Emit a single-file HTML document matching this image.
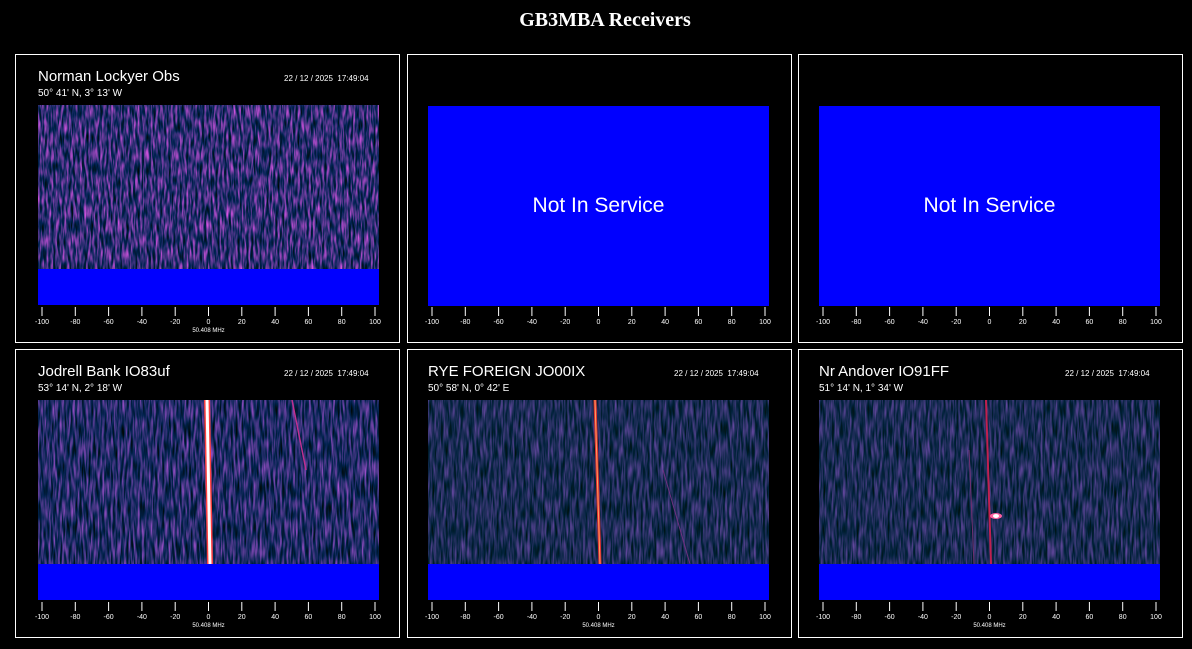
<!DOCTYPE html>
<html><head><meta charset="utf-8"><style>
body{margin:0;background:#000;width:1192px;height:649px;overflow:hidden;position:relative;font-family:"Liberation Sans",sans-serif;color:#fff}
h1{position:absolute;top:9px;left:0;width:1210px;text-align:center;margin:0;font:bold 20px "Liberation Serif",serif}
.p{position:absolute;width:385px;height:289px;border:1px solid #fff;box-sizing:border-box}
.t{position:absolute;left:22px;top:13px;font-size:15px}
.c{position:absolute;left:22px;top:33px;font-size:10px}
.d{position:absolute;left:268px;top:19px;font-size:8px}
.w{position:absolute;left:22px;top:50px;width:341px;height:200px}
.ns{position:absolute;left:20px;top:51px;width:341px;height:200px;background:#0000ff;font-size:21px;display:flex;align-items:center;justify-content:center}
.ax{position:absolute;left:0;top:250px;width:383px;height:35px}
</style></head><body>
<svg width="0" height="0" style="position:absolute">
<filter id="n1" x="0" y="0" width="100%" height="100%" color-interpolation-filters="sRGB"><feTurbulence type="fractalNoise" baseFrequency="0.45 0.07" numOctaves="2" seed="3"/><feColorMatrix type="matrix" values="1.8 0 0 0 -0.72  0.4 0 0 0 -0.02  1.2 0 0 0 -0.15  0 0 0 0 1"/></filter>
<filter id="n2" x="0" y="0" width="100%" height="100%" color-interpolation-filters="sRGB"><feTurbulence type="fractalNoise" baseFrequency="0.45 0.05" numOctaves="2" seed="7"/><feColorMatrix type="matrix" values="1.4 0 0 0 -0.58  0.4 0 0 0 -0.03  1.1 0 0 0 -0.15  0 0 0 0 1"/></filter>
<filter id="n3" x="0" y="0" width="100%" height="100%" color-interpolation-filters="sRGB"><feTurbulence type="fractalNoise" baseFrequency="0.45 0.05" numOctaves="2" seed="11"/><feColorMatrix type="matrix" values="0.8 0 0 0 -0.3  0.3 0 0 0 0.02  0.8 0 0 0 -0.07  0 0 0 0 1"/></filter>
</svg>
<h1>GB3MBA Receivers</h1>

<div class="p" style="left:15px;top:54px">
<div class="t">Norman Lockyer Obs</div><div class="c">50° 41' N, 3° 13' W</div><div class="d">22 / 12 / 2025 &nbsp;17:49:04</div>
<svg class="w" viewBox="0 0 341 200"><rect width="341" height="164" filter="url(#n1)"/><rect y="164" width="341" height="36" fill="#0000ff"/></svg>
<svg class="ax" viewBox="0 0 383 35" font-size="7" fill="#fff" text-anchor="middle"><g stroke="#fff"><path d="M26 2v9M59.3 2v9M92.6 2v9M125.9 2v9M159.2 2v9M192.5 2v9M225.8 2v9M259.1 2v9M292.4 2v9M325.7 2v9M359 2v9"/></g><text x="26" y="19">-100</text><text x="59.3" y="19">-80</text><text x="92.6" y="19">-60</text><text x="125.9" y="19">-40</text><text x="159.2" y="19">-20</text><text x="192.5" y="19">0</text><text x="225.8" y="19">20</text><text x="259.1" y="19">40</text><text x="292.4" y="19">60</text><text x="325.7" y="19">80</text><text x="359" y="19">100</text><text x="192.5" y="27" font-size="6">50.408 MHz</text></svg>
</div>

<div class="p" style="left:407px;top:54px">
<div class="ns">Not In Service</div>
<svg class="ax" viewBox="0 0 383 35" font-size="7" fill="#fff" text-anchor="middle"><g stroke="#fff"><path d="M24 2v9M57.3 2v9M90.6 2v9M123.9 2v9M157.2 2v9M190.5 2v9M223.8 2v9M257.1 2v9M290.4 2v9M323.7 2v9M357 2v9"/></g><text x="24" y="19">-100</text><text x="57.3" y="19">-80</text><text x="90.6" y="19">-60</text><text x="123.9" y="19">-40</text><text x="157.2" y="19">-20</text><text x="190.5" y="19">0</text><text x="223.8" y="19">20</text><text x="257.1" y="19">40</text><text x="290.4" y="19">60</text><text x="323.7" y="19">80</text><text x="357" y="19">100</text></svg>
</div>

<div class="p" style="left:798px;top:54px">
<div class="ns">Not In Service</div>
<svg class="ax" viewBox="0 0 383 35" font-size="7" fill="#fff" text-anchor="middle"><g stroke="#fff"><path d="M24 2v9M57.3 2v9M90.6 2v9M123.9 2v9M157.2 2v9M190.5 2v9M223.8 2v9M257.1 2v9M290.4 2v9M323.7 2v9M357 2v9"/></g><text x="24" y="19">-100</text><text x="57.3" y="19">-80</text><text x="90.6" y="19">-60</text><text x="123.9" y="19">-40</text><text x="157.2" y="19">-20</text><text x="190.5" y="19">0</text><text x="223.8" y="19">20</text><text x="257.1" y="19">40</text><text x="290.4" y="19">60</text><text x="323.7" y="19">80</text><text x="357" y="19">100</text></svg>
</div>

<div class="p" style="left:15px;top:349px">
<div class="t">Jodrell Bank IO83uf</div><div class="c">53° 14' N, 2° 18' W</div><div class="d">22 / 12 / 2025 &nbsp;17:49:04</div>
<svg class="w" viewBox="0 0 341 200"><rect width="341" height="164" filter="url(#n2)"/><path d="M169 0 L172 164" stroke="#ff4040" stroke-width="6"/><path d="M169 0 L172 164" stroke="#fff" stroke-width="3"/><path d="M254 0 L268 70" stroke="#c03090" stroke-width="1.5"/><rect y="164" width="341" height="36" fill="#0000ff"/></svg>
<svg class="ax" viewBox="0 0 383 35" font-size="7" fill="#fff" text-anchor="middle"><g stroke="#fff"><path d="M26 2v9M59.3 2v9M92.6 2v9M125.9 2v9M159.2 2v9M192.5 2v9M225.8 2v9M259.1 2v9M292.4 2v9M325.7 2v9M359 2v9"/></g><text x="26" y="19">-100</text><text x="59.3" y="19">-80</text><text x="92.6" y="19">-60</text><text x="125.9" y="19">-40</text><text x="159.2" y="19">-20</text><text x="192.5" y="19">0</text><text x="225.8" y="19">20</text><text x="259.1" y="19">40</text><text x="292.4" y="19">60</text><text x="325.7" y="19">80</text><text x="359" y="19">100</text><text x="192.5" y="27" font-size="6">50.408 MHz</text></svg>
</div>

<div class="p" style="left:407px;top:349px">
<div class="t" style="left:20px">RYE FOREIGN JO00IX</div><div class="c" style="left:20px">50° 58' N, 0° 42' E</div><div class="d" style="left:266px">22 / 12 / 2025 &nbsp;17:49:04</div>
<svg class="w" style="left:20px" viewBox="0 0 341 200"><rect width="341" height="164" filter="url(#n3)"/><path d="M167 0 L172 164" stroke="#e03030" stroke-width="3"/><path d="M167 0 L172 164" stroke="#ffa060" stroke-width="1"/><path d="M235 70 L262 164" stroke="#703080" stroke-width="1"/><rect y="164" width="341" height="36" fill="#0000ff"/></svg>
<svg class="ax" viewBox="0 0 383 35" font-size="7" fill="#fff" text-anchor="middle"><g stroke="#fff"><path d="M24 2v9M57.3 2v9M90.6 2v9M123.9 2v9M157.2 2v9M190.5 2v9M223.8 2v9M257.1 2v9M290.4 2v9M323.7 2v9M357 2v9"/></g><text x="24" y="19">-100</text><text x="57.3" y="19">-80</text><text x="90.6" y="19">-60</text><text x="123.9" y="19">-40</text><text x="157.2" y="19">-20</text><text x="190.5" y="19">0</text><text x="223.8" y="19">20</text><text x="257.1" y="19">40</text><text x="290.4" y="19">60</text><text x="323.7" y="19">80</text><text x="357" y="19">100</text><text x="190.5" y="27" font-size="6">50.408 MHz</text></svg>
</div>

<div class="p" style="left:798px;top:349px">
<div class="t" style="left:20px">Nr Andover IO91FF</div><div class="c" style="left:20px">51° 14' N, 1° 34' W</div><div class="d" style="left:266px">22 / 12 / 2025 &nbsp;17:49:04</div>
<svg class="w" style="left:20px" viewBox="0 0 341 200"><rect width="341" height="164" filter="url(#n3)"/><path d="M167 0 L172 164" stroke="#c02050" stroke-width="2"/><path d="M150 50 L155 164" stroke="#703070" stroke-width="1"/><ellipse cx="177" cy="116" rx="6" ry="3" fill="#ff60a0"/><ellipse cx="177" cy="116" rx="3" ry="2" fill="#fff"/><rect y="164" width="341" height="36" fill="#0000ff"/></svg>
<svg class="ax" viewBox="0 0 383 35" font-size="7" fill="#fff" text-anchor="middle"><g stroke="#fff"><path d="M24 2v9M57.3 2v9M90.6 2v9M123.9 2v9M157.2 2v9M190.5 2v9M223.8 2v9M257.1 2v9M290.4 2v9M323.7 2v9M357 2v9"/></g><text x="24" y="19">-100</text><text x="57.3" y="19">-80</text><text x="90.6" y="19">-60</text><text x="123.9" y="19">-40</text><text x="157.2" y="19">-20</text><text x="190.5" y="19">0</text><text x="223.8" y="19">20</text><text x="257.1" y="19">40</text><text x="290.4" y="19">60</text><text x="323.7" y="19">80</text><text x="357" y="19">100</text><text x="190.5" y="27" font-size="6">50.408 MHz</text></svg>
</div>
</body></html>
